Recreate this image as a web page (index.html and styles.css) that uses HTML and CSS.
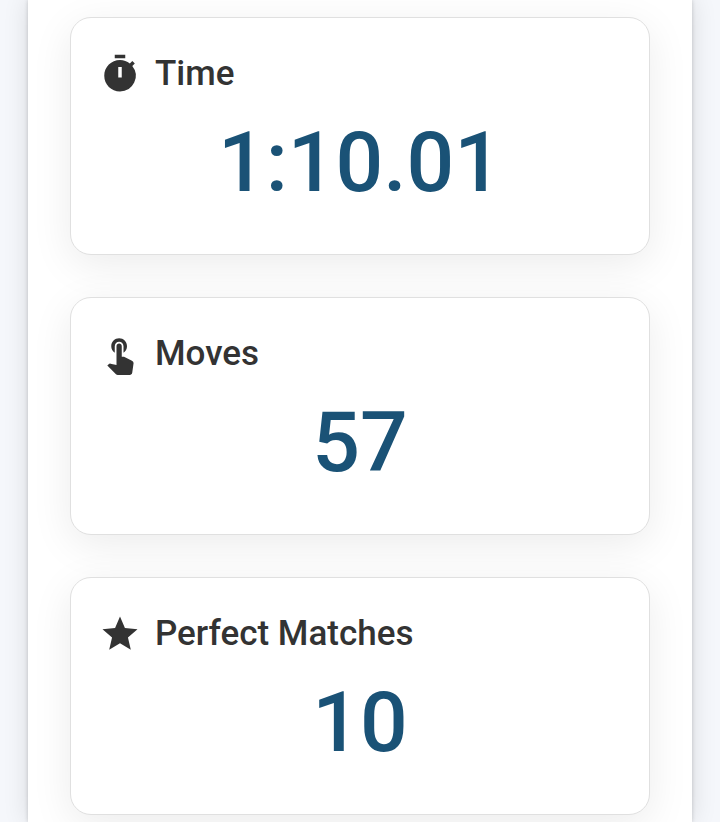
FILE: index.html
```
<!DOCTYPE html>
<html lang="en">
<head>
    <meta charset="UTF-8">
    <meta name="viewport" content="width=device-width, initial-scale=1.0">
    <title>Game Results</title>
    <link rel="stylesheet" href="styles.css">
</head>
<body>
    <main class="results">
        <section class="stat-card">
            <h2 class="stat-title">
                <svg class="stat-icon" viewBox="0 0 24 24" aria-hidden="true">
                    <path d="M9 1h6v2H9zM19.030 7.390l1.420-1.420c-.43-.51-.9-.99-1.410-1.410l-1.420 1.420C16.070 4.740 14.120 4 12 4c-4.970 0-9 4.030-9 9s4.020 9 9 9a8.994 8.994 0 0 0 7.030-14.610zM13 14h-2V8h2v6z"/>
                </svg>
                Time
            </h2>
            <p class="stat-value">1:10.01</p>
        </section>
        <section class="stat-card">
            <h2 class="stat-title">
                <svg class="stat-icon" viewBox="0 0 24 24" aria-hidden="true">
                    <path d="M9 11.240V7.500C9 6.120 10.120 5 11.500 5S14 6.120 14 7.500v3.740c1.210-.81 2-2.180 2-3.740C16 5.010 13.990 3 11.500 3S7 5.010 7 7.500c0 1.560.79 2.930 2 3.740zm9.840 4.630l-4.540-2.260c-.17-.07-.35-.11-.54-.11H13v-6c0-.83-.67-1.500-1.500-1.500S10 6.670 10 7.500v10.740l-3.430-.72c-.08-.01-.15-.03-.24-.03-.31 0-.59.13-.79.33l-.79.8 4.940 4.940c.27.27.65.44 1.060.44h6.790c.75 0 1.330-.55 1.440-1.280l.75-5.270c.01-.07.02-.14.02-.2 0-.62-.38-1.160-.91-1.380z"/>
                </svg>
                Moves
            </h2>
            <p class="stat-value">57</p>
        </section>
        <section class="stat-card">
            <h2 class="stat-title">
                <svg class="stat-icon" viewBox="0 0 24 24" aria-hidden="true">
                    <path d="M12 17.270L18.180 21l-1.640-7.030L22 9.240l-7.190-.61L12 2 9.190 8.630 2 9.240l5.460 4.730L5.820 21z"/>
                </svg>
                Perfect Matches
            </h2>
            <p class="stat-value">10</p>
        </section>
    </main>
</body>
</html>
```
FILE: styles.css
```
* {
    box-sizing: border-box;
}

body {
    margin: 0;
    padding: 0 28px;
    background-color: #f5f7fb;
    color: #333;
    font-family: Roboto, sans-serif;
}

.results {
    display: flex;
    flex-direction: column;
    gap: 42px;
    min-height: 100vh;
    padding: 17px 42px 7px;
    background-color: #fff;
    box-shadow: 0 0 4px rgba(0, 0, 0, 0.18), 0 0 24px rgba(0, 0, 0, 0.12);
}

.stat-card {
    padding: 35px 28px 41px;
    background-color: #fff;
    border: 1px solid #e0e0e0;
    border-radius: 21px;
    box-shadow: 0 10px 42px rgba(0, 0, 0, 0.08);
}

.stat-title {
    display: flex;
    align-items: center;
    gap: 14px;
    margin: 0;
    font-size: 35px;
    font-weight: 500;
    line-height: 42px;
}

.stat-icon {
    width: 42px;
    height: 42px;
    fill: currentColor;
}

.stat-value {
    margin: 18px 0 0;
    color: #1a5276;
    font-size: 84px;
    font-weight: 500;
    line-height: 100px;
    text-align: center;
}
```
